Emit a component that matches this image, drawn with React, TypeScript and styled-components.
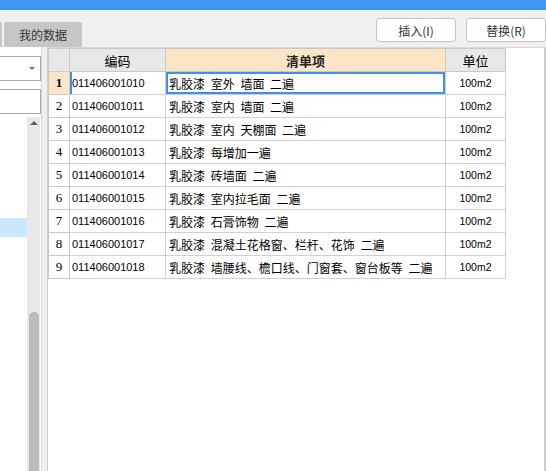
import React from 'react';
import styled, { createGlobalStyle } from 'styled-components';

const GlobalStyle = createGlobalStyle`
  html, body {
    margin: 0;
    padding: 0;
    background: #ffffff;
  }
  body {
    font-family: "Noto Sans CJK SC", "Liberation Sans", sans-serif;
    font-size: 12px;
    color: #000;
  }
`;

const Page = styled.div`
  width: 546px;
  height: 471px;
  display: flex;
  flex-direction: column;
  overflow: hidden;
`;

const TitleBar = styled.div`
  height: 10px;
  background: #3d97f2;
`;

const Toolbar = styled.div`
  height: 37px;
  background: #f0f0f0;
  display: flex;
  justify-content: space-between;
  align-items: flex-start;
`;

const Tabs = styled.div`
  display: flex;
  align-items: flex-end;
  gap: 2px;
  height: 100%;
`;

const Tab = styled.div<{ $w: number }>`
  width: ${(p) => p.$w}px;
  height: 25px;
  background: #c6c6c6;
  border-radius: 2px 2px 0 0;
  display: flex;
  align-items: center;
  justify-content: center;
  font-size: 12px;
  color: #333;
`;

const Buttons = styled.div`
  display: flex;
  gap: 10px;
  padding-top: 8px;
`;

const Button = styled.button`
  width: 80px;
  height: 24px;
  background: #fff;
  border: 1px solid #c4c4c4;
  border-radius: 3px;
  font-family: "Noto Sans CJK SC", "Liberation Sans", sans-serif;
  font-size: 12px;
  color: #333;
  padding: 0;
`;

const Body = styled.div`
  flex: 1;
  display: flex;
  background: #f0f0f0;
  min-height: 0;
`;

const Side = styled.div`
  width: 41px;
  background: #fff;
  border-right: 1px solid #d4d4d4;
  display: flex;
  flex-direction: column;
  padding-top: 9px;
  gap: 8px;
`;

const Field = styled.div`
  height: 23px;
  border: 1px solid #ababab;
  border-left: none;
  background: #fff;
  position: relative;
`;

const Caret = styled.span`
  position: absolute;
  right: 5px;
  top: 10px;
  width: 0;
  height: 0;
  border-left: 3px solid transparent;
  border-right: 3px solid transparent;
  border-top: 3px solid #707070;
`;

const List = styled.div`
  flex: 1;
  display: flex;
  margin-top: -5px;
`;

const ListItems = styled.div`
  width: 27px;
  padding-top: 101px;
`;

const ListRow = styled.div<{ $sel?: boolean }>`
  height: 19px;
  background: ${(p) => (p.$sel ? '#cce8ff' : 'transparent')};
`;

const Scroll = styled.div`
  width: 13px;
  background: #e8e8e8;
  display: flex;
  flex-direction: column;
  align-items: center;
`;

const UpArrow = styled.span`
  margin-top: 4px;
  width: 0;
  height: 0;
  border-left: 4px solid transparent;
  border-right: 4px solid transparent;
  border-bottom: 4px solid #606060;
`;

const Thumb = styled.div`
  margin-top: 187px;
  width: 10px;
  flex: 1;
  background: #bcbcbc;
  border-radius: 5px 5px 0 0;
`;

const Gap = styled.div`
  width: 5px;
`;

const Main = styled.div`
  flex: 1;
  background: #fff;
  border-left: 1px solid #cfcfcf;
  border-right: 2px solid #cfcfcf;
  border-top: 1px solid #d8d8d8;
`;

const Table = styled.table`
  border-collapse: collapse;
  table-layout: fixed;
  width: 457px;
`;

const Th = styled.th<{ $hl?: boolean; $w: number }>`
  width: ${(p) => p.$w}px;
  height: 22px;
  padding: 0;
  background: ${(p) => (p.$hl ? '#fde6c8' : '#e8e8e8')};
  border: 1px solid #c8c8c8;
  font-weight: ${(p) => (p.$hl ? 700 : 400)};
  font-size: 13px;
  color: ${(p) => (p.$hl ? '#222' : '#000')};
  text-align: center;
`;

const Num = styled.td<{ $cur?: boolean }>`
  height: 22px;
  padding: 0;
  border: 1px solid #c8c8c8;
  background: ${(p) => (p.$cur ? '#fde6c8' : '#fff')};
  font-family: "Liberation Serif", "DejaVu Serif", serif;
  font-weight: ${(p) => (p.$cur ? 700 : 400)};
  font-size: 13px;
  text-align: center;
`;

const Code = styled.td<{ $cur?: boolean }>`
  padding: 0 0 0 2px;
  border: 1px solid #d0d0d0;
  box-shadow: ${(p) => (p.$cur ? 'inset 2px 0 0 #3d8ff0' : 'none')};
  font-family: "Liberation Sans", Arial, sans-serif;
  font-size: 11px;
  white-space: nowrap;
`;

const Item = styled.td<{ $cur?: boolean }>`
  padding: 0 0 0 3px;
  border: 1px solid #d0d0d0;
  box-shadow: ${(p) => (p.$cur ? 'inset 0 0 0 2px #3d8ff0' : 'none')};
  font-size: 12px;
  word-spacing: 3px;
  white-space: nowrap;
  overflow: hidden;
`;

const Unit = styled.td`
  padding: 0;
  border: 1px solid #d0d0d0;
  font-family: "Liberation Sans", Arial, sans-serif;
  font-size: 10.5px;
  text-align: center;
`;

const rows = [
  ['011406001010', '乳胶漆 室外 墙面 二遍'],
  ['011406001011', '乳胶漆 室内 墙面 二遍'],
  ['011406001012', '乳胶漆 室内 天棚面 二遍'],
  ['011406001013', '乳胶漆 每增加一遍'],
  ['011406001014', '乳胶漆 砖墙面 二遍'],
  ['011406001015', '乳胶漆 室内拉毛面 二遍'],
  ['011406001016', '乳胶漆 石膏饰物 二遍'],
  ['011406001017', '乳胶漆 混凝土花格窗、栏杆、花饰 二遍'],
  ['011406001018', '乳胶漆 墙腰线、檐口线、门窗套、窗台板等 二遍'],
];

export default function App() {
  return (
    <Page>
      <GlobalStyle />
      <TitleBar />
      <Toolbar>
        <Tabs>
          <Tab $w={2} />
          <Tab $w={78}>我的数据</Tab>
        </Tabs>
        <Buttons>
          <Button>插入(I)</Button>
          <Button>替换(R)</Button>
        </Buttons>
      </Toolbar>
      <Body>
        <Side>
          <Field>
            <Caret />
          </Field>
          <Field />
          <List>
            <ListItems>
              <ListRow $sel />
            </ListItems>
            <Scroll>
              <UpArrow />
              <Thumb />
            </Scroll>
          </List>
        </Side>
        <Gap />
        <Main>
          <Table>
            <thead>
              <tr>
                <Th $w={20} />
                <Th $w={95}>编码</Th>
                <Th $w={279} $hl>清单项</Th>
                <Th $w={59}>单位</Th>
              </tr>
            </thead>
            <tbody>
              {rows.map(([code, name], i) => (
                <tr key={code}>
                  <Num $cur={i === 0}>{i + 1}</Num>
                  <Code $cur={i === 0}>{code}</Code>
                  <Item $cur={i === 0}>{name}</Item>
                  <Unit>100m2</Unit>
                </tr>
              ))}
            </tbody>
          </Table>
        </Main>
      </Body>
    </Page>
  );
}
